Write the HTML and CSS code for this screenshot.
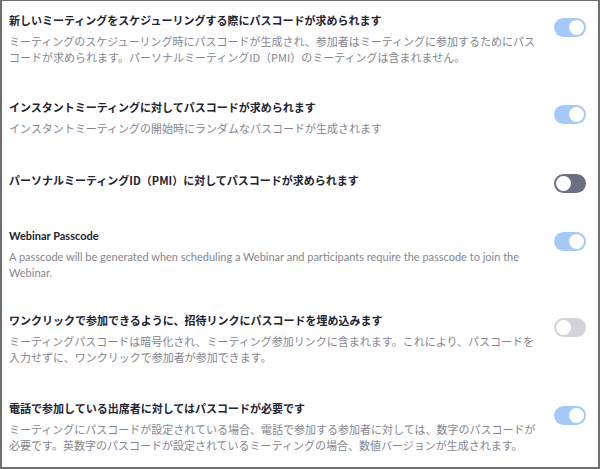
FILE: index.html
```html
<!DOCTYPE html>
<html lang="ja">
<head>
<meta charset="utf-8">
<link rel="stylesheet" href="styles.css">
</head>
<body>
<div class="frame">
  <div class="row">
    <div class="text">
      <div class="title">新しいミーティングをスケジューリングする際にパスコードが求められます</div>
      <div class="desc">ミーティングのスケジューリング時にパスコードが生成され、参加者はミーティングに参加するためにパスコードが求められます。パーソナルミーティングID（PMI）のミーティングは含まれません。</div>
    </div>
    <span class="toggle on"></span>
  </div>
  <div class="row r2">
    <div class="text">
      <div class="title">インスタントミーティングに対してパスコードが求められます</div>
      <div class="desc">インスタントミーティングの開始時にランダムなパスコードが生成されます</div>
    </div>
    <span class="toggle on"></span>
  </div>
  <div class="row r3">
    <div class="text">
      <div class="title">パーソナルミーティングID（PMI）に対してパスコードが求められます</div>
    </div>
    <span class="toggle dark"></span>
  </div>
  <div class="row r4">
    <div class="text latin">
      <div class="title">Webinar Passcode</div>
      <div class="desc">A passcode will be generated when scheduling a Webinar and participants require the passcode to join the Webinar.</div>
    </div>
    <span class="toggle on"></span>
  </div>
  <div class="row r5">
    <div class="text">
      <div class="title">ワンクリックで参加できるように、招待リンクにパスコードを埋め込みます</div>
      <div class="desc">ミーティングパスコードは暗号化され、ミーティング参加リンクに含まれます。これにより、パスコードを入力せずに、ワンクリックで参加者が参加できます。</div>
    </div>
    <span class="toggle off"></span>
  </div>
  <div class="row">
    <div class="text">
      <div class="title">電話で参加している出席者に対してはパスコードが必要です</div>
      <div class="desc">ミーティングにパスコードが設定されている場合、電話で参加する参加者に対しては、数字のパスコードが必要です。英数字のパスコードが設定されているミーティングの場合、数値バージョンが生成されます。</div>
    </div>
    <span class="toggle on"></span>
  </div>
</div>
</body>
</html>
```

FILE: styles.css
```css
html, body {
  margin: 0;
  padding: 0;
  background: #ffffff;
}
body {
  font-family: "Noto Sans CJK JP", "Noto Sans", sans-serif;
}
.frame {
  box-sizing: border-box;
  width: 600px;
  height: 469px;
  border: 1px solid #6f6f6f;
  border-left-width: 2px;
  border-bottom-width: 2px;
  border-right-width: 2px;
  padding: 11px 12px 0 7px;
  overflow: hidden;
}
.row {
  display: flex;
  justify-content: space-between;
  align-items: flex-start;
  padding-bottom: 34px;
}
.row.r2 {
  padding-bottom: 36px;
}
.row.r3 {
  padding-bottom: 35px;
}
.row.r4 {
  padding-bottom: 31px;
}
.row.r5 {
  padding-bottom: 35px;
}
.text {
  width: 532px;
}
.title {
  font-size: 11px;
  line-height: 16px;
  font-weight: 700;
  color: #232333;
}
.desc {
  margin-top: 5px;
  font-size: 11px;
  line-height: 16px;
  color: #85858f;
}
.latin .title {
  font-family: Lato, "Noto Sans", sans-serif;
  font-size: 11px;
}
.latin .desc {
  font-family: Lato, "Noto Sans", sans-serif;
  font-size: 11px;
}
.toggle {
  position: relative;
  flex: none;
  width: 32px;
  height: 19px;
  border-radius: 10px;
  margin-top: 6px;
}
.r4 .toggle {
  margin-top: 4px;
}
.toggle::after {
  content: "";
  position: absolute;
  top: 2px;
  width: 15px;
  height: 15px;
  border-radius: 50%;
  background: #ffffff;
}
.toggle.on {
  background: #a6c9f7;
}
.toggle.on::after {
  right: 2px;
}
.toggle.dark {
  background: #6e6f82;
  margin-top: 2px;
}
.toggle.dark::after {
  left: 2px;
}
.toggle.off {
  background: #d3d3d9;
}
.toggle.off::after {
  left: 2px;
}
```
